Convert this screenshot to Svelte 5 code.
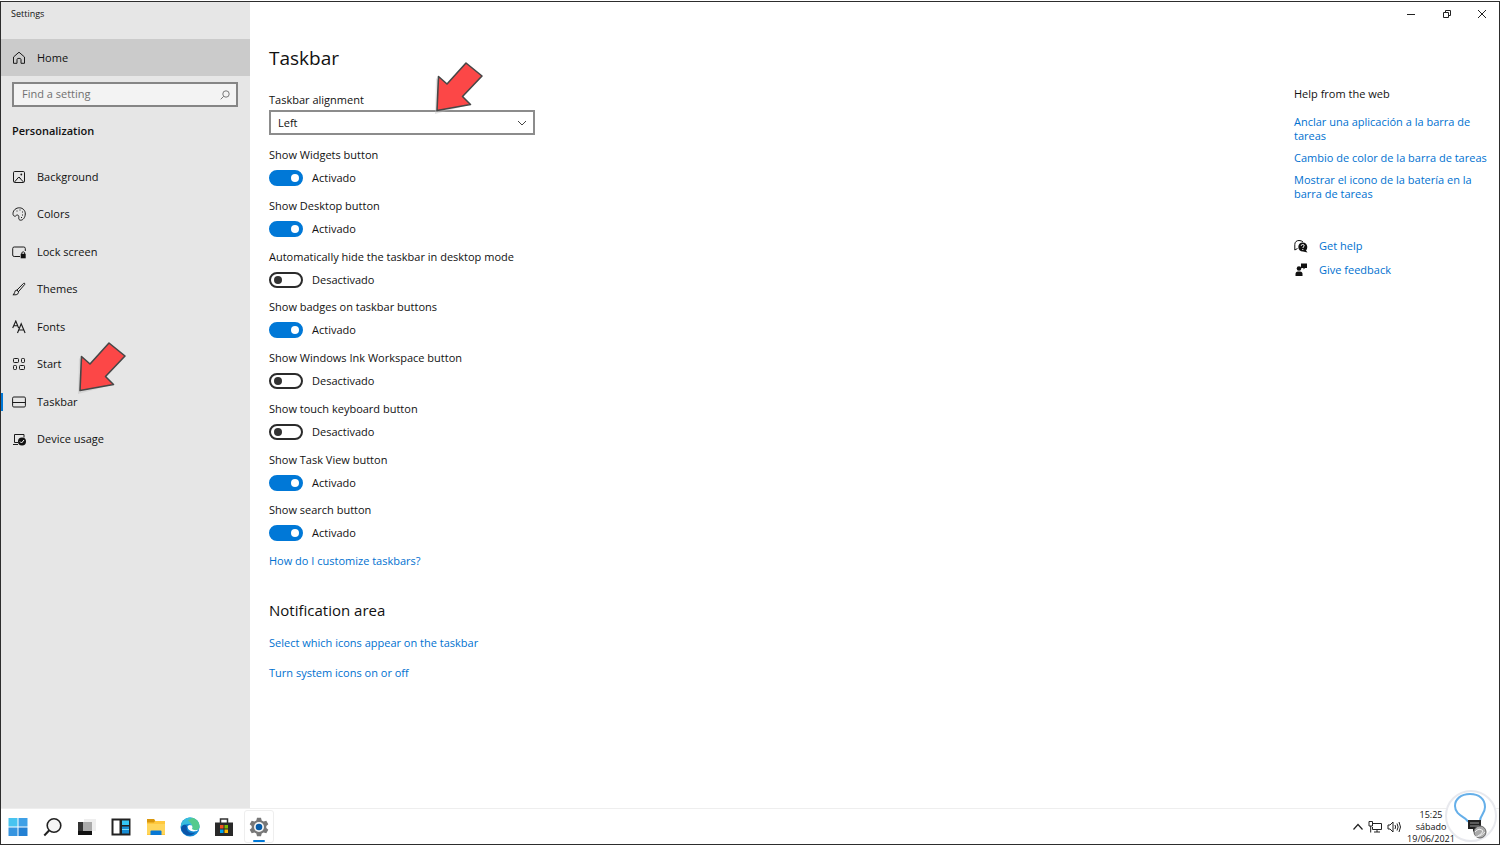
<script lang="ts">
  interface Toggle {
    id: string;
    label: string;
    on: boolean;
  }

  const navItems = ['Background', 'Colors', 'Lock screen', 'Themes', 'Fonts', 'Start', 'Taskbar', 'Device usage'];
  const apps = ['Start menu', 'Search', 'Task View', 'Widgets', 'File Explorer', 'Edge', 'Store', 'Settings'];

  let active = $state('Taskbar');
  let alignment = $state('Left');
  let toggles: Toggle[] = $state([
    { id: 'widgets', label: 'Show Widgets button', on: true },
    { id: 'desktop', label: 'Show Desktop button', on: true },
    { id: 'autohide', label: 'Automatically hide the taskbar in desktop mode', on: false },
    { id: 'badges', label: 'Show badges on taskbar buttons', on: true },
    { id: 'ink', label: 'Show Windows Ink Workspace button', on: false },
    { id: 'keyboard', label: 'Show touch keyboard button', on: false },
    { id: 'taskview', label: 'Show Task View button', on: true },
    { id: 'search', label: 'Show search button', on: true }
  ]);
</script>

{#snippet arrow()}
  <svg class="arrow" width="52" height="54" viewBox="0 0 52 54" aria-hidden="true">
    <path d="M29 4 45 17 26 37 34 44 0 53 1 17 10 25z" fill="#bbb" opacity="0.4" />
    <path d="M31 2 47 15 27.500 35.500 35.500 43.500 2 49.500 3.500 15.500 12 23z" fill="#fc4747" stroke="#474747" stroke-width="1.600" stroke-linejoin="round" />
  </svg>
{/snippet}

{#snippet navIcon(name: string)}
  <svg class="nav-icon" width="14" height="14" viewBox="0 0 14 14" fill="none" stroke="#1a1a1a" stroke-width="1" aria-hidden="true">
    {#if name === 'Home'}
      <path d="M1.500 6 7 1.200 12.500 6v6.300H9V8.500Q9 7.300 7 7.300T5 8.500v3.800H1.500z" stroke-linejoin="round" />
    {:else if name === 'Background'}
      <rect x="1.500" y="1.500" width="11" height="11" rx="1.200" />
      <path d="M2.500 12 6.800 7l4.700 5M7 7l1.700 1.800" />
      <circle cx="9.300" cy="4.500" r="0.900" fill="#1a1a1a" stroke="none" />
    {:else if name === 'Colors'}
      <path d="M1 6.500C1.200 3 4.200.700 7.500.800c3.500.1 5.900 2.900 5.800 6.200-.1 3.500-2.300 6.200-4.600 6.200-1.500 0-2.100-1-1.900-2.500.2-1.700-.3-2.700-1.500-2.700-1.300 0-1.300 1.500-2.700 1.200C1.400 8.900.900 7.800 1 6.500z" />
      <path d="M4.500 4h1M7.500 3h1M10 5h1M10 8h1M9 10.500h1" />
    {:else if name === 'Lock screen'}
      <path d="M8 11.500H2.200Q.700 11.500.700 10V3.500Q.700 2 2.200 2h9.600q1.500 0 1.500 1.500V6" />
      <rect x="8.700" y="8.800" width="5" height="4.500" fill="#111" stroke="none" />
      <path d="M9.800 9V7.600q1.400-1.700 2.800 0V9" />
    {:else if name === 'Themes'}
      <path d="M5 8 11.500 1.400q1.500-.8 1.300.9L6.500 9.700zM5 8q-2.100 0-2.400 2.500Q2.200 12.300.900 12.800q4 .5 5.100-1.100.7-1 .5-2z" />
      <path d="m5 8 1.600 1.800" />
    {:else if name === 'Fonts'}
      <path d="M.700 8 3.800 1l2.800 7M1.700 5.700h4M5.500 13 9.200 3.700l3.900 9.300M6.600 10h5.200" stroke-width="1.100" />
    {:else if name === 'Start'}
      <rect x="1.500" y="1.500" width="5" height="4" rx=".8" />
      <rect x="9.500" y="1.500" width="3" height="4" rx=".8" />
      <rect x="1.500" y="8.500" width="3" height="4" rx=".8" />
      <rect x="7.500" y="8.500" width="5" height="4" rx=".8" />
    {:else if name === 'Taskbar'}
      <rect x=".600" y="2" width="12.800" height="10" rx="1.200" />
      <path d="M.600 7.500h12.800" />
    {:else}
      <path d="M6 10.500H2.500V2.500h9.500v3M1 12.500h5" />
      <circle cx="10" cy="9.500" r="4" fill="#111" stroke="none" />
      <path d="m8 9.500 1.500 1.500 2.500-3" stroke="#fff" />
    {/if}
  </svg>
{/snippet}

{#snippet appIcon(name: string)}
  <svg width="20" height="20" viewBox="0 0 20 20" fill="none" aria-hidden="true">
    {#if name === 'Start menu'}
      <path d="M.500 1h9v8.500h-9z" fill="#48c4f0" />
      <path d="M10.500 1h9v8.500h-9z" fill="#3fa0e6" />
      <path d="M.500 10.500h9V19h-9z" fill="#3795e0" />
      <path d="M10.500 10.500h9V19h-9z" fill="#2380d3" />
    {:else if name === 'Search'}
      <circle cx="11" cy="8.500" r="6.800" fill="#f5f5f5" stroke="#222" stroke-width="1.600" />
      <path d="m6.300 13.200-5 5.300" stroke="#222" stroke-width="2" />
    {:else if name === 'Task View'}
      <path d="M7 2h12v12H7z" fill="#eee" />
      <path d="M1 5h13v13H1z" fill="#333" />
      <path d="M6 5h9v9H6z" fill="#aaa" />
      <path d="M1 14h14v4H1z" fill="#111" />
    {:else if name === 'Widgets'}
      <path d="M.500 1.500h19v17H.500z" fill="#222" />
      <path d="M2.500 3.500h6v13h-6z" fill="#fff" />
      <path d="M11 3.500h7V8h-7z" fill="#35c6f5" />
      <path d="M11 9.500h7v7h-7z" fill="#168cd4" />
      <path d="M11 12.500h7" stroke="#76dafa" />
    {:else if name === 'File Explorer'}
      <path d="M1 2h7l1.500 2H19v14H1z" fill="#ffc83d" />
      <path d="M1 2h7l1 2-1 1.500H1z" fill="#d9970d" />
      <path d="M1 7h18v10H1z" fill="#ffd65c" />
      <path d="M4.500 18v-3.500q0-1 1-1h9q1 0 1 1V18z" fill="#0878d4" />
    {:else if name === 'Edge'}
      <circle cx="10" cy="10" r="9.500" fill="#1289d6" />
      <path d="M1 8C2 3 6 .500 10.500.500c6 .2 9.500 5 9 9.500-.4 3.500-5.500 4.500-7.500 2.500 1.500-3-1-5.500-4-5.500-2.500 0-5 1-6.500 3z" fill="#38bddc" />
      <path d="M12 .800c5 .8 8 5.200 7.500 9.200-.4 3.500-5.500 4.500-7.500 2.500 1.500-3-.5-6.500-4-9z" fill="#5bcd79" opacity="0.800" />
      <path d="M7 9c-1.500 5 3 8 8 6.500-3 4.500-12 4-14-4C2 7 5 7 7 9z" fill="#0b55a8" />
      <path d="M12 8.500q-3.500-1.500-4.500 1 .5 4.500 6 5 3.500-.2 5.500-2-5 1.500-7-.5 1-1.500 0-3.500z" fill="#fff" />
    {:else if name === 'Store'}
      <path d="M6.500 6V2h7v4" stroke="#333" stroke-width="1.500" />
      <path d="M1 5.500h18V19H1z" fill="#292929" />
      <path d="M6 8h3.500v3.500H6z" fill="#f25022" />
      <path d="M10.500 8H14v3.500h-3.500z" fill="#7fba00" />
      <path d="M6 12.500h3.500V16H6z" fill="#00a4ef" />
      <path d="M10.500 12.500H14V16h-3.500z" fill="#ffb900" />
    {:else}
      <path d="m8 .800 4 0 .7 2.800 1.800 1 2.800-.8 2 3.500L17.300 9v2l2 1.700-2 3.500-2.800-.8-1.800 1-.7 2.800H8l-.7-2.800-1.800-1-2.800.8-2-3.500L2.700 11V9L.700 7.300l2-3.500 2.800.8 1.800-1z" fill="#777" />
      <circle cx="10" cy="10" r="5" fill="#f6f6f6" />
      <circle cx="10" cy="10" r="3.300" fill="#075ca8" />
    {/if}
  </svg>
{/snippet}

<div class="screen">
  <div class="window">
    <aside class="sidebar">
      <div class="app-title">Settings</div>
      <button class="home">{@render navIcon('Home')}Home</button>
      <div class="search">
        <input type="text" placeholder="Find a setting" aria-label="Find a setting" />
        <svg width="10" height="10" viewBox="0 0 10 10" fill="none" stroke="#777" aria-hidden="true">
          <circle cx="6" cy="4" r="3.200" />
          <path d="M3.700 6.300.700 9.300" />
        </svg>
      </div>
      <h2>Personalization</h2>
      <nav>
        {#each navItems as item}
          <button class="nav-item" class:active={active === item} onclick={() => (active = item)}>
            {@render navIcon(item)}
            <span>{item}</span>
            {#if item === 'Taskbar'}{@render arrow()}{/if}
          </button>
        {/each}
      </nav>
    </aside>

    <main>
      <h1>Taskbar</h1>
      <label class="field-label" for="alignment">Taskbar alignment</label>
      <div class="select-box">
        <select id="alignment" bind:value={alignment}>
          <option>Left</option>
          <option>Center</option>
        </select>
        <svg class="chevron" width="10" height="6" viewBox="0 0 10 6" fill="none" stroke="#444" aria-hidden="true">
          <path d="m1 1 4 4 4-4" />
        </svg>
        {@render arrow()}
      </div>

      <div class="toggles">
        {#each toggles as toggle (toggle.id)}
          <div class="toggle">
            <label for={toggle.id}>{toggle.label}</label>
            <div class="toggle-row">
              <input id={toggle.id} type="checkbox" role="switch" bind:checked={toggle.on} />
              <span>{toggle.on ? 'Activado' : 'Desactivado'}</span>
            </div>
          </div>
        {/each}
      </div>
      <a href="#customize">How do I customize taskbars?</a>

      <h3>Notification area</h3>
      <div class="links">
        <a href="#icons">Select which icons appear on the taskbar</a>
        <a href="#system">Turn system icons on or off</a>
      </div>
    </main>

    <div class="right">
      <div class="caption">
        <button aria-label="Minimize">
          <svg width="10" height="10" viewBox="0 0 10 10" fill="none" stroke="#222"><path d="M1 5.500h8" /></svg>
        </button>
        <button aria-label="Restore">
          <svg width="10" height="10" viewBox="0 0 10 10" fill="none" stroke="#222"><path d="M1.500 3.500h5v5h-5zM3.500 3V1.500h5v5H7" /></svg>
        </button>
        <button aria-label="Close">
          <svg width="10" height="10" viewBox="0 0 10 10" fill="none" stroke="#222"><path d="m1 1 8 8M9 1 1 9" /></svg>
        </button>
      </div>
      <section class="help">
        <h4>Help from the web</h4>
        <a href="#pin">Anclar una aplicación a la barra de tareas</a>
        <a href="#color">Cambio de color de la barra de tareas</a>
        <a href="#battery">Mostrar el icono de la batería en la barra de tareas</a>
        <div class="support">
          <a href="#help">
            <svg width="14" height="14" viewBox="0 0 14 14" fill="none" aria-hidden="true">
              <path d="M3.500 9.500.800 11V5.500C.800 3 2.500 1.500 5 1.500q2.500 0 4 1.500" stroke="#111" />
              <path d="M12 11.500 13.500 13.500 9 12.500c-2.800 0-4.700-1.800-4.700-4.500S6 3.500 8.700 3.500 13.300 5.300 13.300 8q0 2-1.300 3.500z" fill="#111" />
              <path d="M7.200 6.800q0-1.300 1.500-1.300t1.500 1.300c0 1-1.400 1-1.400 2.200M8.800 10v1" stroke="#fff" />
            </svg>
            Get help
          </a>
          <a href="#feedback">
            <svg width="14" height="14" viewBox="0 0 14 14" fill="#111" aria-hidden="true">
              <path d="M7 .500h6v4.500h-2L9.500 6.500V5H7z" />
              <circle cx="5" cy="5.500" r="2.300" />
              <path d="M1.500 13V11q0-2.500 2.500-2.500h2q2.500 0 2.500 2.500v2z" />
            </svg>
            Give feedback
          </a>
        </div>
      </section>
    </div>
  </div>

  <footer>
    <div class="apps">
      {#each apps as app}
        <button class:open={app === 'Settings'} aria-label={app}>{@render appIcon(app)}</button>
      {/each}
    </div>
    <svg class="bulb" width="54" height="56" viewBox="0 0 54 56" fill="none" aria-hidden="true">
      <circle cx="27" cy="28" r="25" fill="#fff" stroke="#e8e9ee" stroke-width="2" />
      <path d="M24 34c-1-5-13-6-13-16C11 11 17 6 26 6s15 5 15 13c0 7-5 8-5 14" stroke="#65afe9" stroke-width="2" />
      <path d="M24 32h13v9h-5l-3 3v-3h-5z" fill="#222" />
      <path d="M26 35h9M26 38h9" stroke="#999" />
      <circle cx="36" cy="44" r="6" fill="#aaa" stroke="#666" />
      <path d="M31 44q4-5 8-1-1 3-5 5M30 48q5 2 11-4" stroke="#eee" />
    </svg>
    <div class="tray">
      <svg width="10" height="8" viewBox="0 0 10 8" fill="none" stroke="#222" stroke-width="1.200" aria-hidden="true">
        <path d="m.500 6.500 4.500-5 4.500 5" />
      </svg>
      <svg width="14" height="12" viewBox="0 0 14 12" fill="none" stroke="#222" aria-hidden="true">
        <path d="M5 2.500h8.500v6H4.500V6M1 .500h3.500V5H1zM2.700 5v6.500M6 11h6M9 8.500V11" />
      </svg>
      <svg width="14" height="12" viewBox="0 0 14 12" fill="none" stroke="#222" aria-hidden="true">
        <path d="M1 4h2l3-3v10L3 8H1zM8 4q1.200 2 0 4M10 2.500q2.200 3.500 0 7M12 1q3 5 0 10" />
      </svg>
      <div class="clock">
        <span>15:25</span>
        <span>sábado</span>
        <span>19/06/2021</span>
      </div>
    </div>
  </footer>
</div>

<style>
  :global(body) {
    margin: 0;
    background: #fff;
  }

  .screen {
    box-sizing: border-box;
    display: flex;
    flex-direction: column;
    min-height: calc(100vh - 2px);
    margin: 1px 0;
    border: 1px solid #2d2d2d;
    background: #fff;
    color: #111;
    font-family: 'Open Sans', 'Noto Sans', sans-serif;
    font-size: 11px;
    line-height: 14px;
  }

  .screen :is(button, input, select) {
    font: inherit;
    color: inherit;
  }

  button {
    border: 0;
    padding: 0;
    background: none;
  }

  h1, h2, h3, h4 {
    margin: 0;
    font-weight: 400;
  }

  a {
    color: #0071d0;
    text-decoration: none;
  }

  .window {
    display: flex;
    flex: 1;
  }

  .sidebar {
    width: 249px;
    flex-shrink: 0;
    background: #e6e6e6;
  }

  .app-title {
    padding: 5px 10px 18px;
    font-size: 9px;
  }

  .home {
    display: flex;
    align-items: center;
    gap: 11px;
    width: 100%;
    height: 37px;
    padding-left: 11px;
    background: #cbcbcb;
  }

  .nav-icon {
    flex-shrink: 0;
  }

  .search {
    display: flex;
    align-items: center;
    margin: 6px 12px 0 11px;
    padding-right: 6px;
    border: 2px solid #858585;
    background: #f3f3f3;
  }

  .search input {
    flex: 1;
    min-width: 0;
    height: 21px;
    box-sizing: border-box;
    padding: 0 8px 2px;
    border: 0;
    outline: 0;
    background: none;
  }

  .search input::placeholder {
    color: #707070;
    opacity: 1;
  }

  h2 {
    margin: 17px 11px 20px;
    font-size: 11px;
    font-weight: 600;
  }

  nav {
    display: grid;
    grid-template-rows: repeat(8, 1fr);
    height: 300px;
  }

  .nav-item {
    position: relative;
    display: flex;
    align-items: center;
    gap: 11px;
    padding-left: 11px;
  }

  .nav-item.active::before {
    content: '';
    position: absolute;
    left: 0;
    width: 2px;
    height: 18px;
    background: #0078d7;
  }

  .arrow {
    position: absolute;
    pointer-events: none;
  }

  .nav-item .arrow {
    left: 77px;
    bottom: 26px;
  }

  main {
    flex: 1;
    padding: 41px 18px 0 19px;
  }

  h1 {
    font-size: 19px;
    line-height: 30px;
  }

  .field-label {
    display: block;
    margin: 20px 0 3px;
  }

  .select-box {
    position: relative;
    width: 266px;
  }

  select {
    appearance: none;
    display: block;
    box-sizing: border-box;
    width: 100%;
    height: 25px;
    padding: 0 7px;
    border: 2px solid #8c8c8c;
    border-radius: 0;
    background: #fff;
  }

  .chevron {
    position: absolute;
    right: 8px;
    top: 10px;
  }

  .select-box .arrow {
    left: 166px;
    bottom: 20px;
  }

  .toggles {
    display: grid;
    grid-template-rows: repeat(8, 1fr);
    height: 406px;
    margin-top: 13px;
  }

  .toggle label {
    display: block;
    margin-bottom: 7px;
  }

  .toggle-row {
    display: flex;
    align-items: center;
    gap: 9px;
    height: 18px;
  }

  .toggle-row input {
    appearance: none;
    box-sizing: border-box;
    display: flex;
    align-items: center;
    width: 34px;
    height: 16px;
    margin: 0;
    padding: 0 3px;
    border: 2px solid #2b2b2b;
    border-radius: 8px;
    background: #fff;
  }

  .toggle-row input::before {
    content: '';
    width: 8px;
    height: 8px;
    border-radius: 50%;
    background: #333;
  }

  .toggle-row input:checked {
    justify-content: flex-end;
    padding: 0 2px;
    border-color: #0078d7;
    background: #0078d7;
  }

  .toggle-row input:checked::before {
    background: #fff;
  }

  h3 {
    margin: 31px 0 15px;
    font-size: 15px;
    line-height: 22px;
  }

  .links {
    display: flex;
    flex-direction: column;
    align-items: flex-start;
    gap: 16px;
  }

  .right {
    width: 205px;
    flex-shrink: 0;
  }

  .caption {
    display: flex;
    justify-content: flex-end;
    height: 24px;
    margin-left: auto;
  }

  .caption button {
    display: grid;
    place-items: center;
    width: 36px;
  }

  .caption button:last-child {
    width: 34px;
  }

  .help {
    display: flex;
    flex-direction: column;
    gap: 8px;
    padding: 61px 10px 0 0;
  }

  h4 {
    margin-bottom: 6px;
    font-size: 11px;
  }

  .support {
    display: flex;
    flex-direction: column;
    gap: 10px;
    margin-top: 30px;
  }

  .support a {
    display: flex;
    gap: 11px;
  }

  footer {
    position: relative;
    display: flex;
    justify-content: space-between;
    height: 35px;
    border-top: 1px solid #eee;
    background: #fff;
  }

  .apps {
    display: grid;
    grid-template-columns: repeat(8, 1fr);
    width: 275px;
  }

  .apps button {
    position: relative;
    display: grid;
    place-items: center;
  }

  .apps .open {
    margin: 1px 2px;
    border: 1px solid #eee;
    border-radius: 3px;
  }

  .apps .open::after {
    content: '';
    position: absolute;
    left: 8px;
    right: 8px;
    bottom: 0;
    height: 2px;
    border-radius: 1px;
    background: #0078d7;
  }

  .tray {
    position: relative;
    display: flex;
    align-items: center;
    gap: 5px;
    padding-right: 43px;
  }

  .clock {
    display: flex;
    flex-direction: column;
    align-items: center;
    width: 50px;
    font-size: 9px;
    line-height: 12px;
  }

  .bulb {
    position: absolute;
    right: 1px;
    bottom: 0;
  }
</style>
